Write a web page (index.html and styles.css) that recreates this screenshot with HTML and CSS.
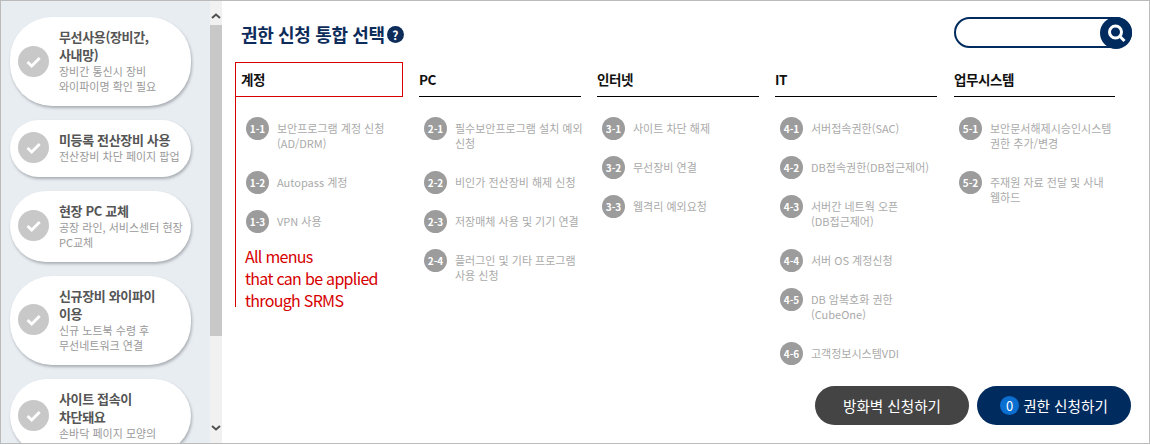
FILE: index.html
```html
<!DOCTYPE html>
<html lang="ko">
  <head>
    <meta charset="UTF-8" />
    <meta name="viewport" content="width=device-width, initial-scale=1.0" />
    <title>권한 신청 통합 선택</title>
    <link rel="stylesheet" href="styles.css">
  </head>
  <body>
    <div class="frame">
      <div class="side">
        <div class="card">
          <span class="check"><svg viewBox="0 0 31 31"><path d="M9.5 16l4.2 4 8-8" /></svg></span>
          <div class="card_text">
            <div class="card_title">무선사용(장비간,<br />사내망)</div>
            <div class="card_sub">장비간 통신시 장비<br />와이파이명 확인 필요</div>
          </div>
        </div>
        <div class="card">
          <span class="check"><svg viewBox="0 0 31 31"><path d="M9.5 16l4.2 4 8-8" /></svg></span>
          <div class="card_text">
            <div class="card_title">미등록 전산장비 사용</div>
            <div class="card_sub">전산장비 차단 페이지 팝업</div>
          </div>
        </div>
        <div class="card">
          <span class="check"><svg viewBox="0 0 31 31"><path d="M9.5 16l4.2 4 8-8" /></svg></span>
          <div class="card_text">
            <div class="card_title">현장 PC 교체</div>
            <div class="card_sub">공장 라인, 서비스센터 현장<br />PC교체</div>
          </div>
        </div>
        <div class="card">
          <span class="check"><svg viewBox="0 0 31 31"><path d="M9.5 16l4.2 4 8-8" /></svg></span>
          <div class="card_text">
            <div class="card_title">신규장비 와이파이<br />이용</div>
            <div class="card_sub">신규 노트북 수령 후<br />무선네트워크 연결</div>
          </div>
        </div>
        <div class="card">
          <span class="check"><svg viewBox="0 0 31 31"><path d="M9.5 16l4.2 4 8-8" /></svg></span>
          <div class="card_text">
            <div class="card_title">사이트 접속이<br />차단돼요</div>
            <div class="card_sub">손바닥 페이지 모양의</div>
          </div>
        </div>
      </div>

      <div class="scroll">
        <svg class="scroll_arrow" viewBox="0 0 12 8"><path d="M2 6l4-3.5L10 6" /></svg>
        <div class="scroll_thumb"></div>
        <svg class="scroll_arrow scroll_down" viewBox="0 0 12 8"><path d="M2 2l4 3.5L10 2" /></svg>
      </div>

      <div class="main">
        <div class="top">
          <h1 class="title">권한 신청 통합 선택<span class="help">?</span></h1>
          <div class="search">
            <button class="search_btn">
              <svg viewBox="0 0 32 32"><circle cx="15.5" cy="15" r="6" /><path d="M20 19.5l4.5 4.5" /></svg>
            </button>
          </div>
        </div>

        <div class="cols">
          <div class="col">
            <div class="mark_box"></div>
            <div class="mark_line"></div>
            <div class="col_head">계정</div>
            <ul class="list">
              <li class="item"><span class="num">1-1</span><span class="txt">보안프로그램 계정 신청<br />(AD/DRM)</span></li>
              <li class="item"><span class="num">1-2</span><span class="txt">Autopass 계정</span></li>
              <li class="item"><span class="num">1-3</span><span class="txt">VPN 사용</span></li>
            </ul>
            <p class="note">All menus<br />that can be applied<br />through SRMS</p>
          </div>
          <div class="col">
            <div class="col_head">PC</div>
            <ul class="list">
              <li class="item"><span class="num">2-1</span><span class="txt">필수보안프로그램 설치 예외<br />신청</span></li>
              <li class="item"><span class="num">2-2</span><span class="txt">비인가 전산장비 해제 신청</span></li>
              <li class="item"><span class="num">2-3</span><span class="txt">저장매체 사용 및 기기 연결</span></li>
              <li class="item"><span class="num">2-4</span><span class="txt">플러그인 및 기타 프로그램<br />사용 신청</span></li>
            </ul>
          </div>
          <div class="col">
            <div class="col_head">인터넷</div>
            <ul class="list">
              <li class="item"><span class="num">3-1</span><span class="txt">사이트 차단 해제</span></li>
              <li class="item"><span class="num">3-2</span><span class="txt">무선장비 연결</span></li>
              <li class="item"><span class="num">3-3</span><span class="txt">웹격리 예외요청</span></li>
            </ul>
          </div>
          <div class="col">
            <div class="col_head">IT</div>
            <ul class="list">
              <li class="item"><span class="num">4-1</span><span class="txt">서버접속권한(SAC)</span></li>
              <li class="item"><span class="num">4-2</span><span class="txt">DB접속권한(DB접근제어)</span></li>
              <li class="item"><span class="num">4-3</span><span class="txt">서버간 네트웍 오픈<br />(DB접근제어)</span></li>
              <li class="item"><span class="num">4-4</span><span class="txt">서버 OS 계정신청</span></li>
              <li class="item"><span class="num">4-5</span><span class="txt">DB 암복호화 권한<br />(CubeOne)</span></li>
              <li class="item"><span class="num">4-6</span><span class="txt">고객정보시스템VDI</span></li>
            </ul>
          </div>
          <div class="col col_last">
            <div class="col_head">업무시스템</div>
            <ul class="list">
              <li class="item"><span class="num">5-1</span><span class="txt">보안문서해제시승인시스템<br />권한 추가/변경</span></li>
              <li class="item"><span class="num">5-2</span><span class="txt">주재원 자료 전달 및 사내<br />웹하드</span></li>
            </ul>
          </div>
        </div>

        <div class="bottom">
          <button class="btn btn_dark">방화벽 신청하기</button>
          <button class="btn btn_blue"><span class="count">0</span>권한 신청하기</button>
        </div>
      </div>
    </div>
  </body>
</html>
```

FILE: styles.css
```css
* {
  box-sizing: border-box;
  padding: 0;
  margin: 0;
}
body {
  font-family: "Noto Sans CJK KR", "Noto Sans", sans-serif;
  background-color: #fff;
}
.frame {
  display: flex;
  width: 1150px;
  height: 444px;
  border: 1px solid #bbb;
  overflow: hidden;
}

/* left list */
.side {
  width: 209px;
  flex-shrink: 0;
  padding: 16px 0 0 9px;
  background-color: #e8edf2;
  overflow: hidden;
}
.card {
  display: flex;
  align-items: center;
  width: 181px;
  margin-bottom: 14px;
  padding: 11px 8px 12.25px 8px;
  border-radius: 42px;
  background-color: #fff;
  box-shadow: 1px 2px 3px #a9aeb3;
}
.check {
  flex-shrink: 0;
  width: 31px;
  height: 31px;
  margin-right: 10px;
  border-radius: 50%;
  background-color: #c8c8c8;
}
.check svg {
  display: block;
  width: 31px;
  height: 31px;
  fill: none;
  stroke: #fff;
  stroke-width: 2.8;
}
.card_title {
  font-size: 13px;
  font-weight: 700;
  line-height: 18px;
  letter-spacing: -0.35px;
  color: #555;
  white-space: nowrap;
}
.card_sub {
  font-size: 11px;
  line-height: 15px;
  color: #999;
  white-space: nowrap;
}

/* fake scrollbar */
.scroll {
  position: relative;
  flex-shrink: 0;
  width: 12px;
  padding-top: 24px;
  background-color: #f1f1f1;
}
.scroll_thumb {
  height: 311px;
  background-color: #c8c8c8;
}
.scroll_arrow {
  position: absolute;
  top: 11px;
  left: 0;
  width: 12px;
  height: 8px;
  fill: none;
  stroke: #505050;
  stroke-width: 2;
}
.scroll_down {
  top: auto;
  bottom: 11px;
}

/* right side */
.main {
  flex: 1;
  display: flex;
  flex-direction: column;
  padding: 16px 17px 18px 19px;
  overflow: hidden;
}
.top {
  display: flex;
  justify-content: space-between;
  align-items: center;
  height: 31px;
}
.title {
  display: flex;
  align-items: center;
  padding-top: 2px;
  font-size: 18px;
  font-weight: 700;
  letter-spacing: -0.35px;
  color: #0d2c5a;
}
.help {
  width: 17px;
  height: 17px;
  margin: 2px 0 0 2px;
  border-radius: 50%;
  background-color: #0d2c5a;
  color: #fff;
  font-size: 12px;
  line-height: 17px;
  letter-spacing: 0;
  text-align: center;
}
.search {
  display: flex;
  justify-content: flex-end;
  width: 178px;
  height: 31px;
  border: 2px solid #002b5f;
  border-radius: 16px;
}
.search_btn {
  width: 32px;
  height: 32px;
  margin: -2px;
  flex-shrink: 0;
  border: none;
  border-radius: 50%;
  background-color: #002b5f;
}
.search_btn svg {
  display: block;
  width: 32px;
  height: 32px;
  fill: none;
  stroke: #fff;
  stroke-width: 3;
}
.cols {
  display: grid;
  grid-template-columns: repeat(5, 162px);
  column-gap: 16px;
  margin-top: 14px;
}
.col {
  position: relative;
}
.col_last {
  margin-left: 1px;
}
.col_head {
  height: 35px;
  padding-top: 6px;
  border-bottom: 1px solid #000;
  font-size: 13.5px;
  font-weight: 700;
  line-height: 22px;
  letter-spacing: -0.4px;
  color: #111;
}
.mark_box {
  position: absolute;
  top: 0;
  left: -6px;
  width: 168px;
  height: 35px;
  border: 1px solid #d60000;
}
.mark_line {
  position: absolute;
  top: 35px;
  left: -6px;
  width: 1px;
  height: 210px;
  background-color: #d60000;
}
.list {
  display: flex;
  flex-direction: column;
  gap: 16px;
  padding: 20px 0 0 5px;
  list-style: none;
}
.item {
  display: flex;
  align-items: flex-start;
}
.num {
  flex-shrink: 0;
  width: 23px;
  height: 23px;
  margin-right: 8px;
  border-radius: 50%;
  background-color: #9c9c9c;
  color: #fff;
  font-size: 10px;
  font-weight: 700;
  line-height: 23px;
  text-align: center;
}
.txt {
  padding: 4px 0;
  font-size: 11px;
  line-height: 15px;
  color: #aaa;
  white-space: nowrap;
}
.note {
  margin: 12px 0 0 4px;
  font-size: 16px;
  line-height: 22px;
  letter-spacing: -0.7px;
  color: #d60000;
  white-space: nowrap;
}
.bottom {
  display: flex;
  justify-content: flex-end;
  gap: 8px;
  margin: auto 1px 0 0;
}
.btn {
  display: flex;
  align-items: center;
  justify-content: center;
  width: 154px;
  height: 39px;
  border: none;
  border-radius: 20px;
  color: #fff;
  font-family: inherit;
  font-size: 14.6px;
}
.btn_dark {
  background-color: #444;
}
.btn_blue {
  background-color: #002b5f;
}
.count {
  width: 19px;
  height: 19px;
  margin-right: 4px;
  border-radius: 50%;
  background-color: #0a6fd0;
  font-size: 13px;
  line-height: 19px;
  text-align: center;
}
```
